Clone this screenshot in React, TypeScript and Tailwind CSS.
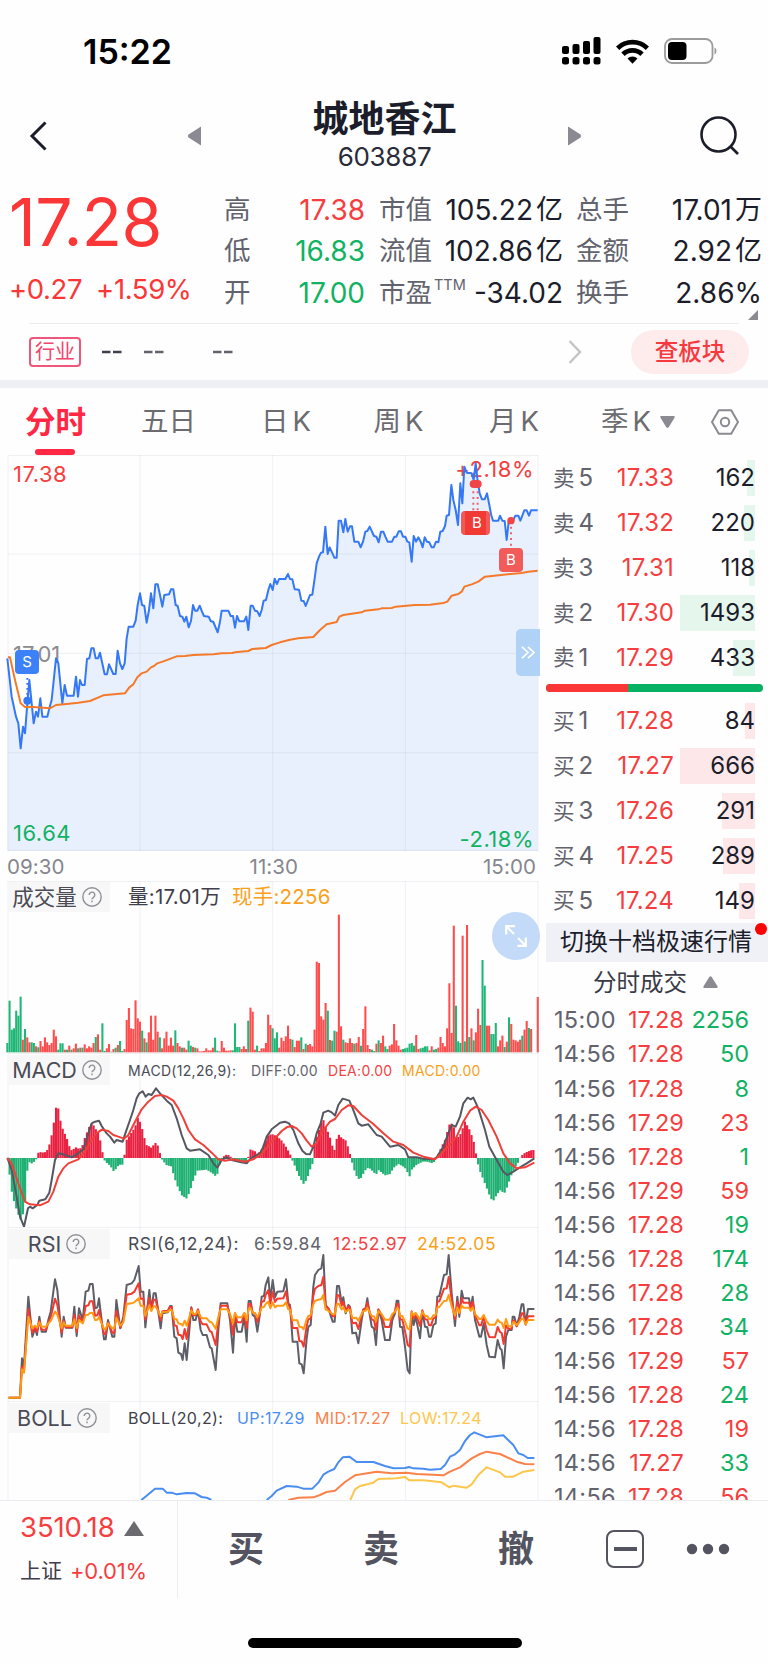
import type { ReactNode } from 'react';

type Tone = 'up' | 'down' | 'ink';

const TONE: Record<Tone, string> = {
  up: 'text-[#f63e40]',
  down: 'text-[#12b264]',
  ink: 'text-[#1c1d2b]',
};

const TABS = [
  { label: '五日', suffix: '', cell: 'w-[115px]' },
  { label: '日', suffix: 'K', cell: 'w-[120px]' },
  { label: '周', suffix: 'K', cell: 'w-[105px]' },
  { label: '月', suffix: 'K', cell: 'w-[126px]' },
];

const SELLS = [
  { label: '卖', level: 5, price: '17.33', volume: 162, bar: 8 },
  { label: '卖', level: 4, price: '17.32', volume: 220, bar: 11 },
  { label: '卖', level: 3, price: '17.31', volume: 118, bar: 6 },
  { label: '卖', level: 2, price: '17.30', volume: 1493, bar: 75 },
  { label: '卖', level: 1, price: '17.29', volume: 433, bar: 22 },
];

const BUYS = [
  { label: '买', level: 1, price: '17.28', volume: 84, bar: 10 },
  { label: '买', level: 2, price: '17.27', volume: 666, bar: 75 },
  { label: '买', level: 3, price: '17.26', volume: 291, bar: 33 },
  { label: '买', level: 4, price: '17.25', volume: 289, bar: 32 },
  { label: '买', level: 5, price: '17.24', volume: 149, bar: 16 },
];

const TRADES: [string, string, number, Tone][] = [
  ['15:00', '17.28', 2256, 'down'],
  ['14:56', '17.28', 50, 'down'],
  ['14:56', '17.28', 8, 'down'],
  ['14:56', '17.29', 23, 'up'],
  ['14:56', '17.28', 1, 'down'],
  ['14:56', '17.29', 59, 'up'],
  ['14:56', '17.28', 19, 'down'],
  ['14:56', '17.28', 174, 'down'],
  ['14:56', '17.28', 28, 'down'],
  ['14:56', '17.28', 34, 'down'],
  ['14:56', '17.29', 57, 'up'],
  ['14:56', '17.28', 24, 'down'],
  ['14:56', '17.28', 19, 'up'],
  ['14:56', '17.27', 33, 'down'],
  ['14:56', '17.28', 56, 'up'],
];

// All series are in chart units, three per CSS pixel.
const PRICE =
  '22,625 35,740 48,800 55,820 62,895 69,830 75,850 82,760 88,690 101,820 108,785 114,800 121,745 127,800 142,800 148,775 155,750 168,625 175,640 187,760 194,705 201,737 221,737 228,680 234,740 240,690 246,705 254,705 261,627 268,625 274,595 281,595 287,625 294,625 300,608 314,673 321,673 327,643 340,672 347,672 353,602 360,640 367,657 374,640 380,565 386,530 400,530 407,512 413,465 420,430 426,465 433,468 440,518 447,480 453,430 460,475 466,403 473,403 480,435 487,470 493,435 507,433 513,418 520,418 527,465 533,468 540,498 547,500 553,515 559,500 566,532 573,513 579,465 585,482 592,482 599,467 606,485 612,498 626,500 632,513 640,516 653,547 660,515 665,482 685,482 692,498 699,498 705,533 711,498 718,514 732,514 739,500 745,540 752,467 758,467 765,482 772,484 779,498 785,480 791,452 798,450 805,420 811,402 818,420 824,386 831,402 837,387 856,387 864,372 870,387 877,388 884,418 897,419 904,452 911,453 917,468 930,435 937,434 944,385 950,340 957,320 963,308 969,307 976,230 983,312 989,292 996,307 1003,323 1010,323 1016,212 1023,212 1030,247 1036,207 1043,245 1050,229 1056,229 1063,275 1075,275 1082,292 1089,275 1096,245 1102,243 1109,230 1116,245 1122,258 1129,260 1136,277 1143,245 1150,245 1156,260 1163,275 1176,275 1183,260 1189,260 1196,244 1203,244 1209,260 1216,260 1222,275 1228,277 1235,335 1241,258 1248,275 1255,262 1262,275 1268,292 1274,262 1281,275 1288,277 1295,292 1301,292 1308,275 1315,277 1321,245 1328,243 1335,228 1340,197 1347,195 1354,105 1360,150 1367,180 1374,225 1381,100 1387,160 1393,50 1400,68 1415,70 1421,90 1427,40 1432,85 1439,130 1446,148 1454,148 1461,130 1468,165 1474,197 1479,212 1495,212 1500,197 1507,212 1514,213 1520,270 1526,215 1533,212 1540,210 1546,197 1555,197 1561,212 1573,181 1580,181 1587,197 1593,181 1613,181';

const AVERAGE =
  '24,622 30,622 45,690 62,760 75,771 100,771 150,775 168,765 200,762 235,758 270,753 310,736 375,730 388,712 400,703 412,682 425,670 440,665 453,652 462,648 472,640 490,634 530,619 555,618 580,615 640,613 665,610 697,609 705,607 745,603 757,597 797,594 815,585 840,577 870,569 895,565 940,561 960,540 980,523 1010,516 1018,500 1030,495 1085,487 1095,482 1135,478 1145,475 1175,474 1187,470 1245,465 1290,464 1330,459 1342,455 1355,437 1375,432 1385,425 1393,410 1415,403 1435,395 1455,380 1510,374 1565,369 1585,365 1613,362';

// One entry per minute: r = rising, g = falling, followed by the bar height.
const VOLUME =
  'g28 g155 g68 g72 g125 g110 g167 r38 g70 r45 r30 g30 g28 r18 g15 r34 r18 r45 r30 r22 r28 r68 r48 g8 g27 g27 r8 g8 r20 g8 r12 r26 g12 r14 g14 r24 r12 r18 r14 r28 g46 r54 r8 g87 g4 r12 r25 g2 r10 g14 r22 g34 g4 r10 r97 r133 r72 r70 r156 r102 r92 g65 r42 g30 r60 r110 r38 r110 r62 g45 r12 r42 r62 r20 r44 r20 g66 r28 r18 g14 r14 r8 g35 g20 r16 g14 r12 r3 r3 r4 r12 r6 r6 r14 g44 g5 r3 r34 r14 r5 r5 r6 g6 g87 g16 g16 r10 r18 r10 g95 r134 r122 r8 g20 r4 r12 r12 r28 r113 r82 g72 g42 g60 r14 r44 r34 r48 r80 r40 g38 r16 r35 r35 g45 r10 g26 r22 r25 r18 r68 r272 r268 r108 r98 r148 g125 r37 g35 g65 r62 r413 r78 g38 r30 r28 r42 r28 g26 r28 r46 g20 r70 r138 r22 r10 g8 g4 r26 g36 r28 r50 g18 g10 r20 r24 r85 r36 r20 r8 g10 g12 g14 g26 g28 g20 r52 r10 g12 g14 g18 g18 r6 r18 g8 g10 r14 r46 r28 r18 r72 r207 r58 r380 g140 g33 g28 r350 g33 r382 g46 r72 g36 r60 r131 r82 g277 g200 r80 r80 g55 g55 g88 r18 r36 r50 g16 r32 g105 r85 r38 r36 r32 r38 g50 r68 r94 g73 r70 r0 r0 r166';

const HISTOGRAM =
  '22,0 28,-45 35,-100 42,-130 48,-150 55,-170 62,-185 70,-165 77,-120 83,-15 90,-12 97,-18 104,-8 110,-2 116,20 125,16 138,18 145,30 152,55 160,95 165,140 171,163 177,138 183,100 190,82 200,60 210,28 218,20 224,35 232,28 245,30 252,55 262,80 270,100 277,104 285,90 297,70 305,30 310,0 316,-12 325,-18 335,-30 342,-42 350,-28 358,-20 370,-20 374,15 380,55 390,70 400,85 410,105 414,124 420,108 430,75 437,40 447,35 455,30 463,44 470,46 477,25 483,0 490,-10 500,-22 513,-25 520,-48 530,-80 545,-112 560,-122 570,-98 580,-65 592,-38 620,-35 640,-48 650,-58 655,-30 661,-12 668,0 675,10 690,8 695,-5 735,-12 742,-8 750,26 765,20 772,12 785,25 795,48 805,68 815,72 830,66 845,52 860,30 870,12 876,-5 885,-25 895,-50 910,-78 920,-65 930,-35 938,-15 944,45 952,70 962,100 968,120 975,98 988,68 1002,18 1010,58 1016,70 1025,60 1038,52 1046,25 1053,0 1060,-30 1072,-60 1080,-65 1088,-50 1100,-30 1110,-32 1128,-50 1135,-36 1155,-52 1170,-48 1180,-30 1195,-18 1210,-26 1220,-35 1227,-60 1235,-35 1250,-20 1270,-10 1285,-12 1298,-16 1305,-8 1312,6 1325,35 1335,55 1342,80 1350,107 1360,98 1368,60 1378,65 1385,80 1394,110 1400,100 1410,82 1422,45 1430,0 1437,-32 1450,-65 1462,-95 1472,-122 1480,-128 1490,-110 1502,-95 1512,-108 1522,-85 1535,-48 1545,-28 1555,-12 1562,5 1575,16 1595,24 1604,24';

const DIFF =
  '22,864 35,900 50,980 60,1040 72,1070 84,1015 90,1010 98,1015 112,1005 118,992 136,988 148,968 155,930 165,870 175,850 190,853 215,862 235,850 250,838 262,800 275,760 285,755 297,752 305,768 320,790 330,800 343,818 350,810 368,815 376,790 390,750 400,720 410,685 418,670 428,664 437,680 445,672 455,675 468,655 480,670 500,692 515,705 530,745 545,795 560,835 570,842 600,838 625,855 640,880 652,893 665,870 680,862 695,870 720,876 740,880 752,865 780,850 790,830 800,800 815,778 840,758 855,755 867,760 880,780 895,820 907,842 918,852 930,853 940,830 950,790 962,760 970,728 985,722 995,727 1005,737 1015,705 1028,686 1048,692 1058,715 1075,760 1085,767 1105,763 1130,795 1145,800 1170,830 1195,825 1215,838 1225,862 1250,862 1270,866 1300,868 1310,862 1330,830 1345,790 1355,765 1367,770 1380,740 1390,700 1403,683 1412,688 1420,683 1435,715 1455,780 1468,830 1490,870 1510,905 1522,915 1540,905 1560,892 1580,880 1603,865';

const DEA =
  '22,864 35,880 55,940 75,995 90,1003 120,1006 145,995 160,965 175,920 190,895 205,880 235,868 255,845 275,810 290,790 305,779 325,783 340,795 355,800 372,806 385,795 400,765 425,718 445,695 465,678 485,675 500,680 520,692 535,715 550,745 565,780 585,808 610,825 635,848 655,868 675,872 700,868 735,875 760,868 785,852 815,815 825,805 845,783 860,772 875,768 890,775 905,790 920,812 935,830 950,820 970,780 990,755 1005,747 1025,720 1045,706 1060,708 1085,735 1120,762 1150,790 1180,815 1210,825 1240,848 1270,860 1305,868 1325,850 1355,818 1370,800 1390,755 1410,722 1427,710 1445,720 1465,750 1490,800 1510,850 1530,880 1550,895 1575,892 1603,878';

const RSI6 =
  '85,230 97,350 105,325 111,345 118,290 125,335 138,335 145,300 152,275 165,178 172,210 185,350 191,290 197,323 217,323 223,260 230,348 237,265 248,300 257,215 265,212 270,192 278,192 285,265 292,262 297,235 312,358 317,358 324,300 337,350 343,350 349,240 361,325 370,290 380,195 395,190 403,180 416,138 422,215 430,215 436,322 448,210 454,270 461,220 467,220 482,325 487,280 503,277 510,258 515,258 523,350 530,355 535,398 543,402 548,420 554,370 560,420 574,262 580,300 587,300 594,270 602,330 608,345 620,345 630,382 635,385 647,450 655,330 662,250 682,250 690,300 699,398 705,290 712,335 725,335 733,290 740,365 746,243 752,243 758,285 765,290 772,335 780,280 785,230 792,228 797,195 805,172 811,240 818,180 825,232 832,215 850,214 858,178 865,250 870,255 878,365 892,365 898,430 905,433 911,460 920,355 925,320 932,315 940,200 945,165 955,150 964,145 970,105 977,255 985,265 998,305 1004,305 1011,198 1017,198 1025,250 1030,232 1037,280 1045,255 1050,260 1057,340 1068,338 1075,370 1085,300 1090,270 1097,265 1102,235 1110,290 1115,320 1122,325 1128,375 1135,270 1145,300 1155,360 1169,360 1177,300 1185,280 1190,242 1195,242 1200,320 1207,322 1215,380 1223,450 1229,460 1235,280 1241,315 1247,290 1260,355 1267,275 1275,320 1282,322 1287,350 1293,350 1300,315 1307,310 1312,230 1318,228 1332,165 1340,163 1346,105 1355,220 1365,318 1372,230 1378,290 1385,212 1390,235 1407,235 1412,265 1418,230 1425,300 1438,350 1443,350 1451,310 1460,375 1468,410 1485,412 1493,360 1500,385 1505,390 1511,445 1518,350 1525,330 1535,330 1538,290 1543,290 1550,318 1558,290 1565,253 1570,253 1577,310 1584,267 1603,267';

const BOLL_UP_EARLY =
  '424,840 440,827 465,806 488,806 500,818 515,818 530,823 560,819 585,820 605,831 620,833 634,840';
const BOLL_UP =
  '800,840 815,828 830,812 860,798 890,800 910,806 937,806 955,788 970,764 985,755 1003,747 1015,727 1028,712 1048,710 1070,726 1120,726 1155,738 1180,745 1215,744 1227,741 1240,745 1270,746 1290,749 1322,747 1335,735 1350,710 1365,703 1380,690 1395,663 1410,645 1423,637 1460,652 1510,646 1540,675 1555,700 1570,705 1583,714 1603,714';
const BOLL_MID =
  '865,840 895,833 940,832 960,825 980,816 1005,812 1035,786 1065,766 1130,755 1175,760 1220,758 1250,762 1330,766 1350,755 1380,742 1415,715 1440,702 1460,695 1500,702 1550,725 1575,732 1603,733';
const BOLL_LOW =
  '1051,840 1065,808 1080,798 1120,788 1135,777 1190,775 1215,771 1228,781 1270,781 1325,787 1348,802 1360,797 1400,803 1415,793 1435,765 1460,742 1500,757 1515,770 1540,770 1570,755 1603,750';

const MINUTE = 6.63;
const START = 22;

const parse = (s: string) => s.split(' ').map((p) => p.split(',').map(Number) as [number, number]);

const volumeBars = VOLUME.split(' ').map((v, i) => ({
  x: START + i * MINUTE - 3,
  h: Number(v.slice(1)),
  fill: v[0] === 'r' ? '#ff4c4d' : '#1fb775',
}));

function sample(points: [number, number][], x: number) {
  const i = points.findIndex((p) => p[0] >= x);
  if (i <= 0) return points[0][1];
  const [x0, y0] = points[i - 1];
  const [x1, y1] = points[i];
  return y0 + ((y1 - y0) * (x - x0)) / (x1 - x0);
}

const histogram = parse(HISTOGRAM);
const macdBars = Array.from({ length: 239 }, (_, i) => {
  const x = START + i * MINUTE;
  return { x: x - 3, v: sample(histogram, x) };
});

// The longer windows follow the 6-minute one with a smaller swing.
function damp(factor: number, base: number, lift: number) {
  return parse(RSI6)
    .map(([x, y]) => {
      const early = x < 380 ? lift : 0;
      const late = x > 1520 ? lift : 0;
      return `${x},${Math.round(y * factor + base + early + late)}`;
    })
    .join(' ');
}

const RSI_LINES = [
  { color: '#5d5e68', points: `26,533 60,533 66,415 72,440 ${RSI6}` },
  { color: '#f4392f', points: `26,533 60,533 66,440 72,455 ${damp(0.59, 109, 22)}` },
  { color: '#ff9a12', points: `26,533 60,533 66,448 72,458 ${damp(0.29, 195, 28)}` },
];

function Plot({ top, height, rows = [], children }: { top: number; height: number; rows?: number[]; children: ReactNode }) {
  return (
    <svg
      className="absolute left-0 top-0"
      width={540}
      height={height}
      viewBox={`0 ${top} 1620 ${height * 3}`}
      fill="none"
    >
      {children}
      <g stroke="#8c93a8" strokeOpacity={0.13} strokeWidth={3}>
        {[24, 420, 818, 1216, 1614].map((x) => (
          <path key={x} d={`M${x} ${top}V${top + height * 3}`} />
        ))}
        {[top + 1.5, ...rows].map((y) => (
          <path key={y} d={`M24 ${y}H1614`} />
        ))}
      </g>
    </svg>
  );
}

function Line({ points, color, width = 6 }: { points: string; color: string; width?: number }) {
  return <polyline points={points} stroke={color} strokeWidth={width} strokeLinejoin="round" />;
}

function HelpIcon() {
  return (
    <svg width="20" height="20" viewBox="0 0 20 20" fill="none" stroke="#8f9098" strokeWidth="1.4">
      <circle cx="10" cy="10" r="9.2" />
      <path d="M7.200 8a2.800 2.800 0 1 1 4.300 2.300c-1 .6-1.500 1-1.500 2M10 13.600v1.600" />
    </svg>
  );
}

function IndicatorHead({ name, children }: { name: string; children: ReactNode }) {
  return (
    <div className="relative flex h-[30px] pl-2">
      <div className="flex h-[30px] w-[102px] items-center justify-center gap-[5px] bg-[#f7f7f8] pr-[4px] text-[21.5px] text-[#4a4b55]">
        <span>{name}</span>
        <HelpIcon />
      </div>
      <div className="flex items-center pl-[18px]">{children}</div>
    </div>
  );
}

function StatusBar() {
  return (
    <div className="flex h-[88px] items-center justify-between pl-[83px] pr-[50px] pt-[14px]">
      <span className="text-[34px] font-semibold text-black">15:22</span>
      <div className="flex items-center gap-[15px]">
        <svg width="39" height="28" viewBox="0 0 39 28">
          <rect x="0" y="9" width="7" height="8" rx="2" />
          <rect x="10.500" y="7" width="7" height="10" rx="2" />
          <rect x="21" y="4" width="7" height="13" rx="2" />
          <rect x="31.500" y="0" width="7" height="17" rx="2" />
          <rect x="0" y="20" width="7" height="7.500" rx="2.500" />
          <rect x="10.500" y="20" width="7" height="7.500" rx="2.500" />
          <rect x="21" y="20" width="7" height="7.500" rx="2.500" />
          <rect x="31.500" y="20" width="7" height="7.500" rx="2.500" />
        </svg>
        <svg width="33" height="25" viewBox="0 0 33 25" fill="none" stroke="#000" strokeWidth="4.800">
          <path d="M1.600 9.200a21.500 21.500 0 0 1 29.800 0" />
          <path d="M7 15.200a13.500 13.500 0 0 1 19 0" />
          <path d="M16.500 24.800l-5-5.200a7.200 7.200 0 0 1 10 0z" fill="#000" stroke="none" />
        </svg>
        <svg width="54" height="26" viewBox="0 0 54 26">
          <rect x="1" y="1" width="47.500" height="24" rx="7" fill="none" stroke="#9b9b9b" strokeWidth="1.800" />
          <rect x="4" y="4" width="18.500" height="18" rx="4" />
          <path d="M50.500 9.500c2.600 1 2.600 6 0 7z" fill="#9b9b9b" />
        </svg>
      </div>
    </div>
  );
}

function TitleBar() {
  return (
    <div className="flex h-[92px] items-center justify-between pl-[29px] pr-[28px]">
      <div className="flex items-center gap-[141px] pt-[4px]">
        <svg width="18" height="30" viewBox="0 0 18 30" fill="none" stroke="#1c1d2b" strokeWidth="3">
          <path d="M16.500 1.500L3 15l13.500 13.500" />
        </svg>
        <svg width="14" height="20" viewBox="0 0 14 20" fill="#8b8a93">
          <path d="M13 0.500v19L.5 11.500q-1-1.500 0-3z" />
        </svg>
      </div>
      <div className="flex flex-col items-center">
        <h1 className="h-[45px] text-[36px] leading-[47px] font-bold text-[#1c1d2b]">城地香江</h1>
        <span className="h-[32px] text-[26px] leading-[31px] tracking-[-0.3px] text-[#2a2b38]">603887</span>
      </div>
      <div className="flex items-center gap-[119px] pt-[4px]">
        <svg width="14" height="20" viewBox="0 0 14 20" fill="#8b8a93">
          <path d="M1 .5v19l12.500-8q1-1.500 0-3z" />
        </svg>
        <svg width="40" height="40" viewBox="0 0 40 40" fill="none" stroke="#1c1d2b" strokeWidth="2.600">
          <circle cx="18.500" cy="18.500" r="17" />
          <path d="M30.500 30.500L38 38" />
        </svg>
      </div>
    </div>
  );
}

function Stat({ label, value, unit, sup, tone = 'ink' }: { label: string; value: string; unit?: string; sup?: string; tone?: Tone }) {
  return (
    <div className="flex h-[41.5px] items-center justify-between">
      <span className="flex text-[26.5px] text-[#62636d]">
        {label}
        {sup && <span className="mt-[3px] ml-[2px] text-[14.5px] leading-[18px]">{sup}</span>}
      </span>
      <span className={`flex items-center text-[28px] ${TONE[tone]}`}>
        {value}
        {unit && <span className="ml-[3px] text-[27px]">{unit}</span>}
      </span>
    </div>
  );
}

function Quote() {
  return (
    <section className="relative flex h-[143px] pl-[11px] pr-[6px] pt-[9px]">
      <div className="-ml-[2px] w-[215px] shrink-0 text-[#fb3637]">
        <div className="h-[66px] text-[66px] leading-[66px] tracking-[-0.7px]">17.28</div>
        <div className="mt-[18px] flex gap-[14px] text-[27.5px] leading-[32px] tracking-[-0.4px]">
          <span>+0.27</span>
          <span>+1.59%</span>
        </div>
      </div>
      <div className="w-[141px]">
        <Stat label="高" value="17.38" tone="up" />
        <Stat label="低" value="16.83" tone="down" />
        <Stat label="开" value="17.00" tone="down" />
      </div>
      <div className="ml-[14px] w-[184px]">
        <Stat label="市值" value="105.22" unit="亿" />
        <Stat label="流值" value="102.86" unit="亿" />
        <Stat label="市盈" sup="TTM" value="-34.02" />
      </div>
      <div className="ml-[13px] w-[186px]">
        <Stat label="总手" value="17.01" unit="万" />
        <Stat label="金额" value="2.92" unit="亿" />
        <Stat label="换手" value="2.86%" />
      </div>
      <svg className="absolute right-[10px] bottom-[3px]" width="10" height="10" viewBox="0 0 10 10">
        <path d="M10 0v10H0z" fill="#8b8a93" />
      </svg>
    </section>
  );
}

function Industry() {
  return (
    <section className="mx-[29px] flex h-[57px] items-center border-t border-[#ececf0] text-[#62636d]">
      <span className="flex h-[30px] w-[52px] items-center justify-center rounded-[4px] border-2 border-[#f0567c] text-[20px] text-[#f0456c]">
        行业
      </span>
      <svg className="ml-[20px]" width="134" height="4" viewBox="0 0 134 4" stroke="#62636d" strokeWidth="2.500">
        <path d="M1 2h8.500M12 2h8.500" stroke="#3f404b" />
        <path d="M43 2h8.500M54 2h8.500M112 2h8.500M123 2h8.500" />
      </svg>
      <svg className="ml-auto" width="14" height="24" viewBox="0 0 14 24" fill="none" stroke="#c3c3c8" strokeWidth="2.400">
        <path d="M1.500 1L12 12 1.500 23" />
      </svg>
      <span className="-mr-[10px] ml-[49px] flex h-[44px] w-[118px] items-center justify-center rounded-full bg-[#feeced] text-[23.5px] font-medium text-[#f5393e]">
        查板块
      </span>
    </section>
  );
}

function Tabs() {
  return (
    <nav className="flex h-[67px] text-[27.5px] text-[#6c6c70]">
      <div className="flex w-[111px] flex-col items-center">
        <span className="mt-[13px] h-[41px] text-[30.5px] leading-[41px] font-bold text-[#ff2743]">分时</span>
        <span className="mt-[7px] -ml-px h-[6px] w-[40px] rounded-full bg-[#ff2743]" />
      </div>
      {TABS.map((tab) => (
        <span key={tab.label} className={`flex h-[67px] items-center justify-center gap-[4px] ${tab.cell}`}>
          {tab.label}
          {tab.suffix && <span>{tab.suffix}</span>}
        </span>
      ))}
      <span className="ml-[24px] flex h-[67px] w-[74px] items-center gap-[4px]">
        季<span>K</span>
        <svg className="ml-auto" width="15" height="12" viewBox="0 0 15 12" fill="#8b8a93">
          <path d="M0.500 0h14q.5 1-.3 2.200l-5.500 9q-1.200 1.200-2.400 0L.8 2.200Q0 1 .5 0z" />
        </svg>
      </span>
      <span className="ml-[36px] flex h-[67px] items-center">
        <svg width="28" height="26" viewBox="0 0 28 26" fill="none" stroke="#8b8a93" strokeWidth="2">
          <path d="M7.800 1.200h12.400L27 13l-6.800 11.800H7.800L1 13z" strokeLinejoin="round" />
          <circle cx="14" cy="13" r="4.200" />
        </svg>
      </span>
    </nav>
  );
}

function PriceChart() {
  return (
    <div className="relative h-[396px]">
      <Plot top={15} height={396} rows={[312, 610, 908, 1201]}>
        <polygon points={`${PRICE} 1613,1203 22,1203`} fill="#e8effd" />
      </Plot>
      <div className="text-[22px] leading-[22px] tracking-[0.5px]">
        <span className="absolute top-[8px] left-[13px] text-[#f63e40]">17.38</span>
        <span className="absolute top-[188px] left-[13px] tracking-[0px] text-[#8b8b8f]">17.01</span>
        <span className="absolute top-[367px] left-[13px] text-[#12b264]">16.64</span>
        <span className="absolute top-[3px] right-[6px] text-[#f63e40]">+2.18%</span>
        <span className="absolute top-[373px] right-[6px] text-[#12b264]">-2.18%</span>
      </div>
      <svg className="absolute top-0 left-0" width="540" height="396" viewBox="0 15 1620 1188" fill="none">
        <Line points={PRICE} color="#3478f6" />
        <Line points={AVERAGE} color="#f47a2a" />
        <circle cx="82" cy="752" r="12" fill="#3478f6" />
        <path d="M82 684V740" stroke="#3478f6" strokeWidth="6" strokeDasharray="5 10" />
        <g fill="#f04446">
          <rect x="1409" y="90" width="36" height="24" rx="12" />
          <circle cx="1533" cy="212" r="11" />
        </g>
        <path d="M1420 124V182M1433 124V182M1533 230V290" stroke="#ee6468" strokeWidth="6" strokeDasharray="6 11" />
      </svg>
      <span className="absolute top-[195px] left-[15px] flex h-[24px] w-[24px] items-center justify-center rounded-[4px] bg-[#3d81f8] text-[15px] text-white">
        S
      </span>
      <span className="absolute top-[56px] left-[461px] flex h-[24px] w-[29px] items-center justify-center rounded-[4px] border-x-4 border-[#f05a57] bg-[#f23a35] pl-[3px] text-[15px] text-white">
        B
      </span>
      <span className="absolute top-[93px] left-[499px] flex h-[24px] w-[24px] items-center justify-center rounded-[4px] bg-[#f15c5a] text-[15px] text-white">
        B
      </span>
      <span className="absolute top-[174px] left-[516px] flex h-[47px] w-[24px] items-center justify-center rounded-l-[5px] bg-[#b0d2f6]">
        <svg width="14" height="13" viewBox="0 0 14 13" fill="none" stroke="#fff" strokeWidth="1.600">
          <path d="M1 .8l6 5.700-6 5.700M7 .8l6 5.700-6 5.700" />
        </svg>
      </span>
    </div>
  );
}

function TimeAxis() {
  return (
    <div className="flex h-[30px] items-center justify-between pt-[3px] pr-[4px] pl-[7px] text-[20.5px] tracking-[0.1px] text-[#85868e]">
      <span>09:30</span>
      <span>11:30</span>
      <span>15:00</span>
    </div>
  );
}

function VolumeChart() {
  return (
    <div className="relative h-[172px] pt-px">
      <Plot top={33} height={172}>
        {volumeBars.map((b) => (
          <rect key={b.x} x={b.x} y={547 - b.h} width={6.2} height={b.h} fill={b.fill} />
        ))}
      </Plot>
      <IndicatorHead name="成交量">
        <span className="text-[20.5px] tracking-[0.25px] text-[#3e3f4a]">量:17.01万</span>
        <span className="ml-[11px] text-[20.5px] tracking-[0.25px] text-[#f9a11b]">现手:2256</span>
      </IndicatorHead>
      <span className="absolute top-[31px] left-[492px] flex h-[48px] w-[48px] items-center justify-center rounded-full bg-[#c3daf9]">
        <svg width="22" height="22" viewBox="0 0 22 22" fill="none" stroke="#fff" strokeWidth="2.200">
          <path d="M1.200 9.500V1.200h8.800M1.500 1.500l7.500 7.500M20.800 12.500v8.300H12.500M20.500 20.500L13 13" />
        </svg>
      </span>
    </div>
  );
}

function MacdChart() {
  return (
    <div className="relative h-[174px] pt-[2px]">
      <Plot top={549} height={174}>
        {macdBars.map((b) => (
          <rect
            key={b.x}
            x={b.x}
            y={b.v > 0 ? 864 - b.v : 864}
            width={6.5}
            height={Math.abs(b.v)}
            fill={b.v > 0 ? '#e9203f' : '#1fb073'}
          />
        ))}
        <Line points={DIFF} color="#555761" />
        <Line points={DEA} color="#f0403a" />
      </Plot>
      <IndicatorHead name="MACD">
        <div className="flex text-[14px] tracking-[0.3px]">
          <span className="w-[123px] text-[#4a4b55]">MACD(12,26,9):</span>
          <span className="w-[77px] text-[#62636d]">DIFF:0.00</span>
          <span className="w-[74px] text-[#f04446]">DEA:0.00</span>
          <span className="text-[#f9a11b]">MACD:0.00</span>
        </div>
      </IndicatorHead>
    </div>
  );
}

function RsiChart() {
  return (
    <div className="relative h-[174px] pt-[2px]">
      <Plot top={21} height={174}>
        {RSI_LINES.map((l) => (
          <Line key={l.color} points={l.points} color={l.color} />
        ))}
      </Plot>
      <IndicatorHead name="RSI">
        <div className="flex text-[17.5px] tracking-[0.6px]">
          <span className="w-[126px] text-[#4a4b55]">RSI(6,12,24):</span>
          <span className="w-[79px] text-[#62636d]">6:59.84</span>
          <span className="w-[84px] text-[#f04446]">12:52.97</span>
          <span className="text-[#f9a11b]">24:52.05</span>
        </div>
      </IndicatorHead>
    </div>
  );
}

function BollChart() {
  return (
    <div className="relative h-[99px] overflow-hidden pt-[2px]">
      <Plot top={543} height={99}>
        <Line points={BOLL_UP_EARLY} color="#4a8df0" />
        <Line points={BOLL_UP} color="#4a8df0" />
        <Line points={BOLL_MID} color="#f9824a" />
        <Line points={BOLL_LOW} color="#fcc74a" />
      </Plot>
      <IndicatorHead name="BOLL">
        <div className="flex text-[16px] tracking-[0.4px]">
          <span className="w-[109px] text-[#3e3f4a]">BOLL(20,2):</span>
          <span className="w-[78px] text-[#4a8df0]">UP:17.29</span>
          <span className="w-[85px] text-[#f9824a]">MID:17.27</span>
          <span className="text-[#fcc74a]">LOW:17.24</span>
        </div>
      </IndicatorHead>
    </div>
  );
}

function DepthRow({ row, fill }: { row: (typeof SELLS)[number]; fill: string }) {
  return (
    <div className="flex h-[44.8px] shrink-0 items-center pr-[13px] pl-[7px] text-[24px]">
      <span className="flex w-[48px] items-center gap-[4px] text-[#62636d]">
        <span className="text-[21.5px]">{row.label}</span>
        <span>{row.level}</span>
      </span>
      <span className="w-[73px] text-right tracking-[0.2px] text-[#f63e40]">{row.price}</span>
      <span className="relative flex h-[36px] flex-1 items-center justify-end text-[#1c1d2b]">
        <span className={`absolute top-0 right-0 h-[36px] ${fill}`} style={{ width: row.bar }} />
        <span className="relative">{row.volume}</span>
      </span>
    </div>
  );
}

function SidePanel() {
  return (
    <aside className="flex w-[222px] flex-col pt-px">
      {SELLS.map((row) => (
        <DepthRow key={row.level} row={row} fill="bg-[#e5f6ed]" />
      ))}
      <div className="mt-[4px] mb-[7px] flex h-[8px] w-[217px] shrink-0 overflow-hidden rounded-full bg-[#06b163]">
        <span className="w-[82px] bg-[#fb3637]" />
      </div>
      {BUYS.map((row) => (
        <DepthRow key={row.level} row={row} fill="bg-[#fee7e8]" />
      ))}
      <div className="relative flex h-[39px] shrink-0 items-center bg-[#f0f1f7] pl-[14px] text-[24px] text-[#1c1d2b]">
        切换十档极速行情
        <span className="absolute top-0 right-[1px] h-[12px] w-[12px] rounded-full bg-[#fd0102]" />
      </div>
      <div className="flex h-[41px] shrink-0 items-center pl-[47px] text-[23.5px] text-[#3a3b47]">
        分时成交
        <svg className="ml-[16px]" width="15" height="12" viewBox="0 0 15 12" fill="#8b8a93">
          <path d="M6.500.8q1-1 2 0l6 9.500q.5 1.400-.5 1.700H1q-1-.3-.5-1.700z" />
        </svg>
      </div>
      {TRADES.map(([time, price, volume, tone], i) => (
        <div key={i} className="flex h-[34.07px] shrink-0 items-center pr-[19px] pl-[8px] text-[23.5px]">
          <span className="w-[63px] tracking-[0.3px] text-[#62636d]">{time}</span>
          <span className="w-[67px] text-right tracking-[0.1px] text-[#f63e40]">{price}</span>
          <span className={`flex-1 text-right ${TONE[tone]}`}>{volume}</span>
        </div>
      ))}
    </aside>
  );
}

function BottomBar() {
  return (
    <footer className="relative flex h-[164px] items-start border-t border-[#ececf0] bg-[#fefefe]">
      <div className="h-[97px] w-[178px] border-r border-[#ececf0] pt-[10px] pl-[20px]">
        <div className="flex h-[34px] items-center gap-[9px] text-[27.5px] tracking-[-0.1px] text-[#f63e40]">
          3510.18
          <svg width="20" height="15" viewBox="0 0 20 15">
            <path d="M10 0l10 15H0z" fill="#6b6b6f" />
          </svg>
        </div>
        <div className="mt-[9px] flex h-[34px] items-center gap-[8px] text-[21px] text-[#3e3f4a]">
          上证
          <span className="text-[22px] tracking-[-0.2px] text-[#f63e40]">+0.01%</span>
        </div>
      </div>
      <div className="flex h-[95px] flex-1 items-center text-[36px] font-bold text-[#53545f]">
        <span className="ml-[50px]">买</span>
        <span className="ml-[99px]">卖</span>
        <span className="ml-[99px]">撤</span>
        <svg className="ml-[72px]" width="38" height="38" viewBox="0 0 38 38" fill="none" stroke="#53545f">
          <rect x="1" y="1" width="36" height="36" rx="7" strokeWidth="2" />
          <path d="M8 19h23" strokeWidth="4" />
        </svg>
        <svg className="ml-[42px]" width="44" height="12" viewBox="0 0 44 12" fill="#53545f">
          <circle cx="6" cy="6" r="5.200" />
          <circle cx="22" cy="6" r="5.200" />
          <circle cx="38" cy="6" r="5.200" />
        </svg>
      </div>
      <span className="absolute bottom-[16px] left-[248px] h-[10px] w-[274px] rounded-full bg-black" />
    </footer>
  );
}

export default function App() {
  return (
    <div className="flex h-[1664px] w-[768px] flex-col overflow-hidden bg-[#fefefe] font-['Inter','Noto_Sans_CJK_SC',sans-serif] whitespace-nowrap">
      <StatusBar />
      <TitleBar />
      <Quote />
      <Industry />
      <div className="h-[8px] bg-[#eff0f5]" />
      <Tabs />
      <main className="flex h-[1045px] gap-[6px] overflow-hidden">
        <div className="w-[540px]">
          <PriceChart />
          <TimeAxis />
          <VolumeChart />
          <MacdChart />
          <RsiChart />
          <BollChart />
        </div>
        <SidePanel />
      </main>
      <BottomBar />
    </div>
  );
}
